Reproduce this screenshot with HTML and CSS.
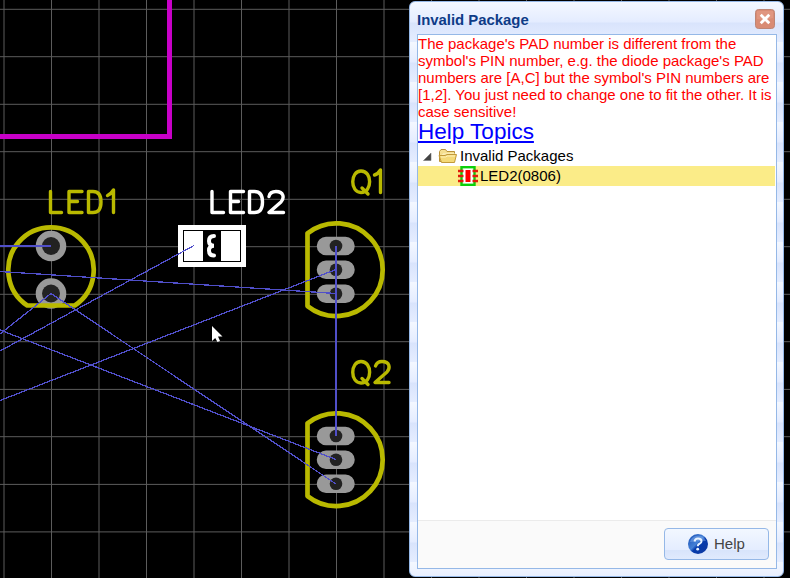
FILE: index.html
```html
<!DOCTYPE html>
<html lang="en">
<head>
<meta charset="utf-8">
<title>PCB Editor</title>
<link rel="stylesheet" href="styles.css">
</head>
<body>
<main class="workspace">
  <svg class="board" width="790" height="578" viewBox="0 0 790 578">
    <defs>
      <g id="transistor">
        <path class="silk" d="M307.500 233.300A46.400 46.400 0 1 1 307.500 306.100Z"/>
        <g class="pads">
          <path d="M326 246h19.500M326 269.700h19.500M326 293.700h19.500"/>
        </g>
        <g class="holes">
          <circle cx="336" cy="246" r="6.300"/><circle cx="336" cy="269.700" r="6.300"/><circle cx="336" cy="293.700" r="6.300"/>
        </g>
      </g>
    </defs>
    <path class="grid-line" d="M4 0V578M51.500 0V578M99 0V578M146.500 0V578M194 0V578M241.500 0V578M289 0V578M336.500 0V578M384 0V578M431.500 0V578M479 0V578M526.500 0V578M574 0V578M621.500 0V578M669 0V578M716.500 0V578M764 0V578"/>
    <path class="grid-line" d="M0 9.300H790M0 56.700H790M0 104.300H790M0 151.700H790M0 199.300H790M0 246.700H790M0 294.300H790M0 341.700H790M0 389.400H790M0 436.700H790M0 484.400H790M0 531.900H790"/>
    <path class="outline" d="M0 136.500H169.500V0"/>

    <g class="rings"><circle cx="51" cy="246" r="10.300"/><circle cx="51" cy="293.500" r="10.300"/></g>
    <g class="holes"><circle cx="51" cy="246" r="9"/><circle cx="51" cy="293.500" r="9"/></g>
    <path class="silk" d="M27.300 305.500A42.700 42.700 0 1 1 74.700 305.500Z"/>
    <use href="#transistor"/>
    <use href="#transistor" y="190"/>

    <g class="chip">
      <rect class="chip-frame" x="180.500" y="227.500" width="63" height="37"/>
      <path class="chip-pads" d="M184 231h19v30h-19zM221 231h19v30h-19z"/>
      <path class="chip-mark" d="M214 236Q209 236 209 241Q209 245.700 214 245.700Q209 245.700 209 250.500Q209 255.500 214 255.500"/>
    </g>

    <g class="labels">
      <path d="M50.500 191.500V212.500H61.500M82 191.500H69V212.500H82M69 201.500H77.500M88.500 191.500V212.500H93Q101 212.500 101 202Q101 191.500 93 191.500ZM107.500 195.500Q111 194 113.500 190V212.500"/>
      <path class="selected" d="M212 191.500V212.500H223.500M243.500 191.500H230.500V212.500H243.500M230.500 201.500H238.500M249.500 191.500V212.500H254.500Q262.500 212.500 262.500 202Q262.500 191.500 254.500 191.500ZM269 196.500Q270 191.500 276 191.500C284 191.500 284.500 198 281 202L269 212.500H283.500"/>
      <path id="q" d="M361 171C350 171 350 192.500 361 192.500C372.500 192.500 372.500 171 361 171ZM362 188L368 194"/>
      <path d="M374.500 175Q378 174 380.500 170V192.500"/>
      <use href="#q" y="190.500"/>
      <path d="M375.500 366Q377 361.500 382 361.500C390 361.500 390.500 368 387 372L375 382.500H389"/>
    </g>

    <g class="ratlines">
      <path d="M0 271.500L336 293.500M194 245.500L0 351M336 269.500L0 400.500M0 334L51 293.500L336 484M0 330L336 459.500"/>
      <path class="wide" d="M0 246H51M336 246V436"/>
    </g>
    <path class="cursor" d="M212 326V341L215.200 338L217.500 342L220 341L218 336.500H222.500Z"/>
  </svg>

  <section class="dialog">
    <header class="dialog-header">
      <h1>Invalid Package</h1>
      <button class="close" aria-label="Close">
        <svg width="20" height="20" viewBox="0 0 20 20">
          <rect x=".5" y=".5" width="19" height="19" rx="3" fill="#d98b74" stroke="#bd8575"/>
          <path d="M2 2H18V9Q10 12 2 10Z" fill="#e49e88" opacity=".6"/>
          <path d="M6.700 6.700L13.300 13.300M13.300 6.700L6.700 13.300" fill="none" stroke="#fff" stroke-width="2.800" stroke-linecap="square"/>
        </svg>
      </button>
    </header>
    <div class="dialog-body">
      <div class="content">
        <p class="message">The package's PAD number is different from the<br>symbol's PIN number, e.g. the diode package's PAD<br>numbers are [A,C] but the symbol's PIN numbers are<br>[1,2]. You just need to change one to fit the other. It is<br>case sensitive!</p>
        <a class="topics" href="#">Help Topics</a>
        <ul class="tree">
          <li class="node">
            <svg class="arrow" width="18" height="20" viewBox="0 0 18 20"><path d="M13 7V14.500H5.500Z" fill="#444" stroke="#777" stroke-width=".6"/></svg>
            <svg class="folder" width="20" height="20" viewBox="0 0 20 20">
              <path d="M1.500 15.500V5.500L3 3.500H7.500L9 5.500H16.500V15.500Z" fill="#f5df91" stroke="#b99137"/>
              <path d="M3 14L5 8H18" fill="none" stroke="#fff5c8"/>
              <path d="M3.500 16.500L1 9.500H7L9 8.500H18.500L16.500 16.500Z" fill="#f4d978" stroke="#c29a3a"/>
              <path d="M3 11H7.500L9.500 10H17" fill="none" stroke="#fff1b8"/>
            </svg>
            <span>Invalid Packages</span>
          </li>
          <li class="node node-selected">
            <svg width="20" height="20" viewBox="0 0 20 20">
              <rect x="3.500" y="1.200" width="13" height="17.600" fill="#fff" stroke="#0bd00b" stroke-width="2.400"/>
              <path d="M0 5H5.500M0 10H5.500M0 15H5.500M14.500 5H20M14.500 10H20M14.500 15H20" stroke="#e01c0a" stroke-width="2.400"/>
              <path d="M7.500 4H12.500V16H7.500Z" fill="#f00"/>
            </svg>
            <span>LED2(0806)</span>
          </li>
        </ul>
      </div>
      <footer class="actions">
        <button class="help">
          <svg width="20" height="20" viewBox="0 0 20 20">
            <defs><linearGradient id="orb" x2="1" y2="1"><stop stop-color="#164eb5"/><stop offset=".45" stop-color="#4480d6"/><stop offset=".55" stop-color="#063bac"/><stop offset="1" stop-color="#103aa0"/></linearGradient></defs>
            <circle cx="10" cy="10" r="10" fill="url(#orb)"/>
            <path d="M2 8A8.500 8.500 0 0 1 18 7Q11 7 2 8Z" fill="#8ab2ed" opacity=".45"/>
            <path d="M6.500 7.500Q7 4.500 10 4.500Q13.500 4.500 13.500 7.200Q13.500 9 11.500 9.800Q9.800 10.500 9.800 12.300" fill="none" stroke="#e8f3ff" stroke-width="2"/>
            <circle cx="9.700" cy="15.200" r="1.400" fill="#e8f3ff"/>
          </svg>
          <span>Help</span>
        </button>
      </footer>
    </div>
  </section>
</main>
</body>
</html>
```
FILE: styles.css
```css
* { box-sizing: border-box; }

body {
  margin: 0;
  background: #000;
  font-family: "Liberation Sans", Arial, sans-serif;
}

.workspace {
  position: relative;
  width: 790px;
  height: 578px;
  overflow: hidden;
}

.board { display: block; }
.board path { fill: none; }
.grid-line { stroke: #5c5c5c; stroke-width: 1; }
.board .outline { stroke: #c800c8; stroke-width: 5; }
.board .silk { stroke: #b9b900; stroke-width: 4.7; stroke-linejoin: round; }
.pads path { stroke: #999; stroke-width: 18.5; stroke-linecap: round; }
.rings circle { fill: none; stroke: #999; stroke-width: 10; }
.holes circle { fill: #222; }
.chip-frame { fill: #000; stroke: #fff; stroke-width: 5; }
.board .chip-pads { fill: #fff; }
.chip-mark { stroke: #fff; stroke-width: 4; stroke-linecap: round; }
.labels path { stroke: #b9b900; stroke-width: 3.4; stroke-linecap: round; stroke-linejoin: round; }
.labels .selected { stroke: #fff; }
.ratlines path { stroke: #504fc9; stroke-width: 1.3; shape-rendering: crispEdges; }
.ratlines .wide { stroke-width: 2; }
.board .cursor { fill: #fff; }

.dialog {
  position: absolute;
  left: 409px;
  top: 1px;
  width: 375px;
  height: 576px;
  display: flex;
  flex-direction: column;
  padding: 1px 6px 7px 7px;
  border: 1px solid #95b8e7;
  border-radius: 6px;
  background: repeating-linear-gradient(#f4f8ff 0, #e4ecff 20px, #d9e4fc 21px, #e5edff 40px) 0 0;
}

.dialog-header {
  height: 31px;
  display: flex;
  align-items: flex-start;
  justify-content: space-between;
  padding: 6px 2px 0 0;
}

.dialog-header h1 {
  margin: 3px 0 0;
  color: #0e3b87;
  font-size: 14.9px;
  line-height: 16px;
}

.close { padding: 0; border: 0; background: none; line-height: 0; }

.dialog-body {
  flex: 1;
  min-height: 0;
  display: flex;
  flex-direction: column;
  border: 1px solid #95b8e7;
  background: #fff;
  width: 360px;
}

.content { flex: 1; }

.message {
  margin: 0;
  color: #f00;
  font-size: 15px;
  line-height: 17px;
  white-space: nowrap;
}

.topics {
  display: block;
  width: max-content;
  color: #00f;
  font-size: 22.5px;
  line-height: 26px;
  margin: -1px 0 0;
}

.tree { margin: 1px 0 0; padding: 0; list-style: none; font-size: 15px; }

.node {
  display: flex;
  align-items: center;
  width: 357px;
  height: 20px;
  line-height: 20px;
  color: #000;
}

.folder { margin: 0 2px; }
.node-selected { padding-left: 40px; gap: 2px; background: #fbec88; }

.actions {
  height: 48px;
  display: flex;
  justify-content: flex-end;
  align-items: flex-start;
  padding: 7px 7px 0 0;
  border-top: 1px solid #ebebeb;
  background: #fafafa;
}

.help {
  width: 105px;
  height: 32px;
  display: flex;
  align-items: center;
  justify-content: flex-start;
  gap: 6px;
  padding: 0 0 0 23px;
  border: 1px solid #95b8e7;
  border-radius: 4px;
  background: linear-gradient(#f2f7ff, #e4edff 70%, #d8e4fb 71%, #e0eafd);
  color: #444;
  font: 15px "Liberation Sans", Arial, sans-serif;
}

.help span { margin-top: -1px; }
```
